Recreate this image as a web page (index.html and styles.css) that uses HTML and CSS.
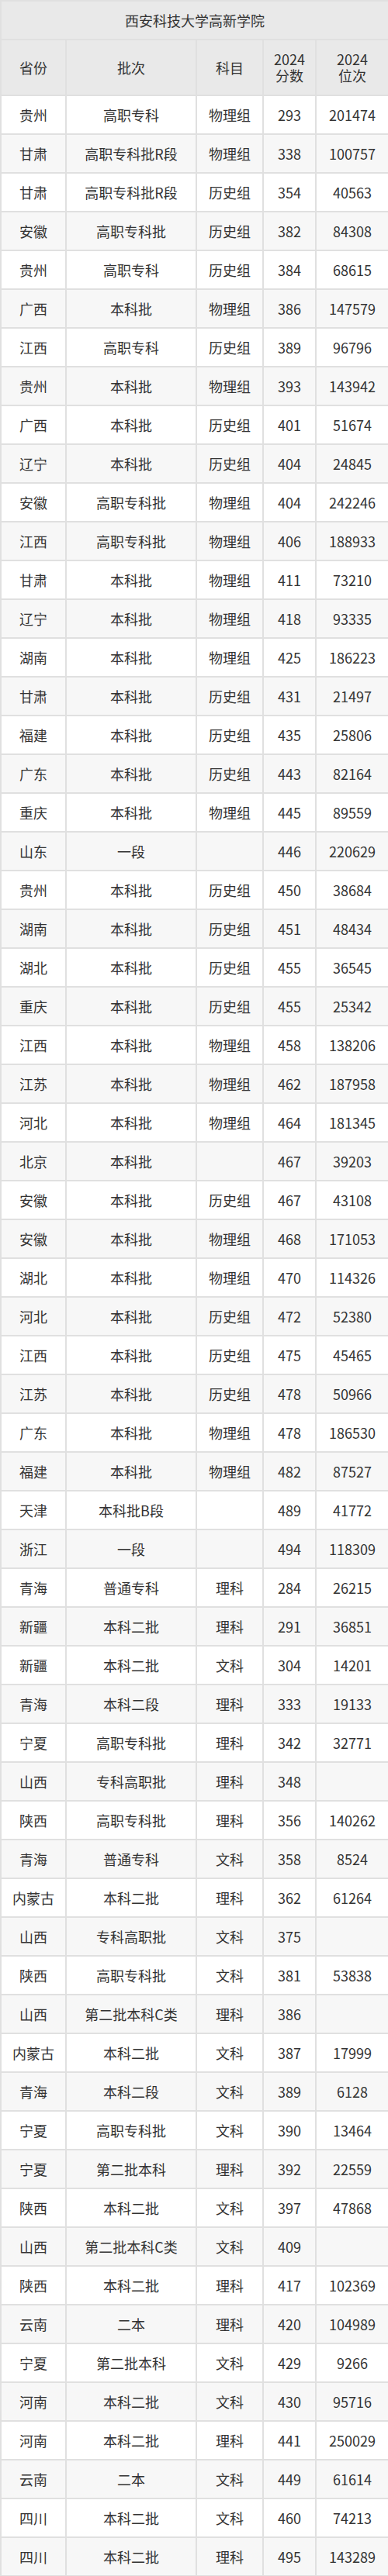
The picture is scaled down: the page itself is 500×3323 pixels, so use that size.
FILE: index.html
```html
<!DOCTYPE html>
<html lang="zh">
<head>
<meta charset="utf-8">
<title>西安科技大学高新学院</title>
<link rel="stylesheet" href="styles.css">
</head>
<body>
<table class="score-table">
<colgroup>
<col class="c-prov"><col class="c-batch"><col class="c-subj"><col class="c-score"><col class="c-rank">
</colgroup>
<thead>
<tr class="title-row"><th colspan="5">西安科技大学高新学院</th></tr>
<tr class="head-row"><th>省份</th><th>批次</th><th>科目</th><th>2024<br>分数</th><th>2024<br>位次</th></tr>
</thead>
<tbody>
<tr><td>贵州</td><td>高职专科</td><td>物理组</td><td>293</td><td>201474</td></tr>
<tr><td>甘肃</td><td>高职专科批R段</td><td>物理组</td><td>338</td><td>100757</td></tr>
<tr><td>甘肃</td><td>高职专科批R段</td><td>历史组</td><td>354</td><td>40563</td></tr>
<tr><td>安徽</td><td>高职专科批</td><td>历史组</td><td>382</td><td>84308</td></tr>
<tr><td>贵州</td><td>高职专科</td><td>历史组</td><td>384</td><td>68615</td></tr>
<tr><td>广西</td><td>本科批</td><td>物理组</td><td>386</td><td>147579</td></tr>
<tr><td>江西</td><td>高职专科</td><td>历史组</td><td>389</td><td>96796</td></tr>
<tr><td>贵州</td><td>本科批</td><td>物理组</td><td>393</td><td>143942</td></tr>
<tr><td>广西</td><td>本科批</td><td>历史组</td><td>401</td><td>51674</td></tr>
<tr><td>辽宁</td><td>本科批</td><td>历史组</td><td>404</td><td>24845</td></tr>
<tr><td>安徽</td><td>高职专科批</td><td>物理组</td><td>404</td><td>242246</td></tr>
<tr><td>江西</td><td>高职专科批</td><td>物理组</td><td>406</td><td>188933</td></tr>
<tr><td>甘肃</td><td>本科批</td><td>物理组</td><td>411</td><td>73210</td></tr>
<tr><td>辽宁</td><td>本科批</td><td>物理组</td><td>418</td><td>93335</td></tr>
<tr><td>湖南</td><td>本科批</td><td>物理组</td><td>425</td><td>186223</td></tr>
<tr><td>甘肃</td><td>本科批</td><td>历史组</td><td>431</td><td>21497</td></tr>
<tr><td>福建</td><td>本科批</td><td>历史组</td><td>435</td><td>25806</td></tr>
<tr><td>广东</td><td>本科批</td><td>历史组</td><td>443</td><td>82164</td></tr>
<tr><td>重庆</td><td>本科批</td><td>物理组</td><td>445</td><td>89559</td></tr>
<tr><td>山东</td><td>一段</td><td></td><td>446</td><td>220629</td></tr>
<tr><td>贵州</td><td>本科批</td><td>历史组</td><td>450</td><td>38684</td></tr>
<tr><td>湖南</td><td>本科批</td><td>历史组</td><td>451</td><td>48434</td></tr>
<tr><td>湖北</td><td>本科批</td><td>历史组</td><td>455</td><td>36545</td></tr>
<tr><td>重庆</td><td>本科批</td><td>历史组</td><td>455</td><td>25342</td></tr>
<tr><td>江西</td><td>本科批</td><td>物理组</td><td>458</td><td>138206</td></tr>
<tr><td>江苏</td><td>本科批</td><td>物理组</td><td>462</td><td>187958</td></tr>
<tr><td>河北</td><td>本科批</td><td>物理组</td><td>464</td><td>181345</td></tr>
<tr><td>北京</td><td>本科批</td><td></td><td>467</td><td>39203</td></tr>
<tr><td>安徽</td><td>本科批</td><td>历史组</td><td>467</td><td>43108</td></tr>
<tr><td>安徽</td><td>本科批</td><td>物理组</td><td>468</td><td>171053</td></tr>
<tr><td>湖北</td><td>本科批</td><td>物理组</td><td>470</td><td>114326</td></tr>
<tr><td>河北</td><td>本科批</td><td>历史组</td><td>472</td><td>52380</td></tr>
<tr><td>江西</td><td>本科批</td><td>历史组</td><td>475</td><td>45465</td></tr>
<tr><td>江苏</td><td>本科批</td><td>历史组</td><td>478</td><td>50966</td></tr>
<tr><td>广东</td><td>本科批</td><td>物理组</td><td>478</td><td>186530</td></tr>
<tr><td>福建</td><td>本科批</td><td>物理组</td><td>482</td><td>87527</td></tr>
<tr><td>天津</td><td>本科批B段</td><td></td><td>489</td><td>41772</td></tr>
<tr><td>浙江</td><td>一段</td><td></td><td>494</td><td>118309</td></tr>
<tr><td>青海</td><td>普通专科</td><td>理科</td><td>284</td><td>26215</td></tr>
<tr><td>新疆</td><td>本科二批</td><td>理科</td><td>291</td><td>36851</td></tr>
<tr><td>新疆</td><td>本科二批</td><td>文科</td><td>304</td><td>14201</td></tr>
<tr><td>青海</td><td>本科二段</td><td>理科</td><td>333</td><td>19133</td></tr>
<tr><td>宁夏</td><td>高职专科批</td><td>理科</td><td>342</td><td>32771</td></tr>
<tr><td>山西</td><td>专科高职批</td><td>理科</td><td>348</td><td></td></tr>
<tr><td>陕西</td><td>高职专科批</td><td>理科</td><td>356</td><td>140262</td></tr>
<tr><td>青海</td><td>普通专科</td><td>文科</td><td>358</td><td>8524</td></tr>
<tr><td>内蒙古</td><td>本科二批</td><td>理科</td><td>362</td><td>61264</td></tr>
<tr><td>山西</td><td>专科高职批</td><td>文科</td><td>375</td><td></td></tr>
<tr><td>陕西</td><td>高职专科批</td><td>文科</td><td>381</td><td>53838</td></tr>
<tr><td>山西</td><td>第二批本科C类</td><td>理科</td><td>386</td><td></td></tr>
<tr><td>内蒙古</td><td>本科二批</td><td>文科</td><td>387</td><td>17999</td></tr>
<tr><td>青海</td><td>本科二段</td><td>文科</td><td>389</td><td>6128</td></tr>
<tr><td>宁夏</td><td>高职专科批</td><td>文科</td><td>390</td><td>13464</td></tr>
<tr><td>宁夏</td><td>第二批本科</td><td>理科</td><td>392</td><td>22559</td></tr>
<tr><td>陕西</td><td>本科二批</td><td>文科</td><td>397</td><td>47868</td></tr>
<tr><td>山西</td><td>第二批本科C类</td><td>文科</td><td>409</td><td></td></tr>
<tr><td>陕西</td><td>本科二批</td><td>理科</td><td>417</td><td>102369</td></tr>
<tr><td>云南</td><td>二本</td><td>理科</td><td>420</td><td>104989</td></tr>
<tr><td>宁夏</td><td>第二批本科</td><td>文科</td><td>429</td><td>9266</td></tr>
<tr><td>河南</td><td>本科二批</td><td>文科</td><td>430</td><td>95716</td></tr>
<tr><td>河南</td><td>本科二批</td><td>理科</td><td>441</td><td>250029</td></tr>
<tr><td>云南</td><td>二本</td><td>文科</td><td>449</td><td>61614</td></tr>
<tr><td>四川</td><td>本科二批</td><td>文科</td><td>460</td><td>74213</td></tr>
<tr><td>四川</td><td>本科二批</td><td>理科</td><td>495</td><td>143289</td></tr>
</tbody>
</table>
</body>
</html>
```

FILE: styles.css
```css
html, body {
  margin: 0;
  padding: 0;
  background: #ffffff;
}

.score-table {
  width: 500px;
  table-layout: fixed;
  border-collapse: collapse;
  font-family: "Noto Sans CJK SC", "Noto Sans", sans-serif;
  font-size: 18px;
  color: #333333;
}

.c-prov { width: 84px; }
.c-batch { width: 168px; }
.c-subj { width: 86px; }
.c-score { width: 68px; }
.c-rank { width: 94px; }

.score-table th,
.score-table td {
  border: 2px solid #e0e0e0;
  padding: 0;
  text-align: center;
  vertical-align: middle;
  font-weight: 400;
  white-space: nowrap;
}

.title-row th {
  height: 48px;
  background: #e9e9e9;
}

.head-row th {
  height: 70px;
  line-height: 21px;
  background: #e9e9e9;
}

.score-table td {
  height: 48px;
  line-height: 24px;
}

.score-table tbody tr:nth-child(even) td {
  background: #f7f7f7;
}
```
